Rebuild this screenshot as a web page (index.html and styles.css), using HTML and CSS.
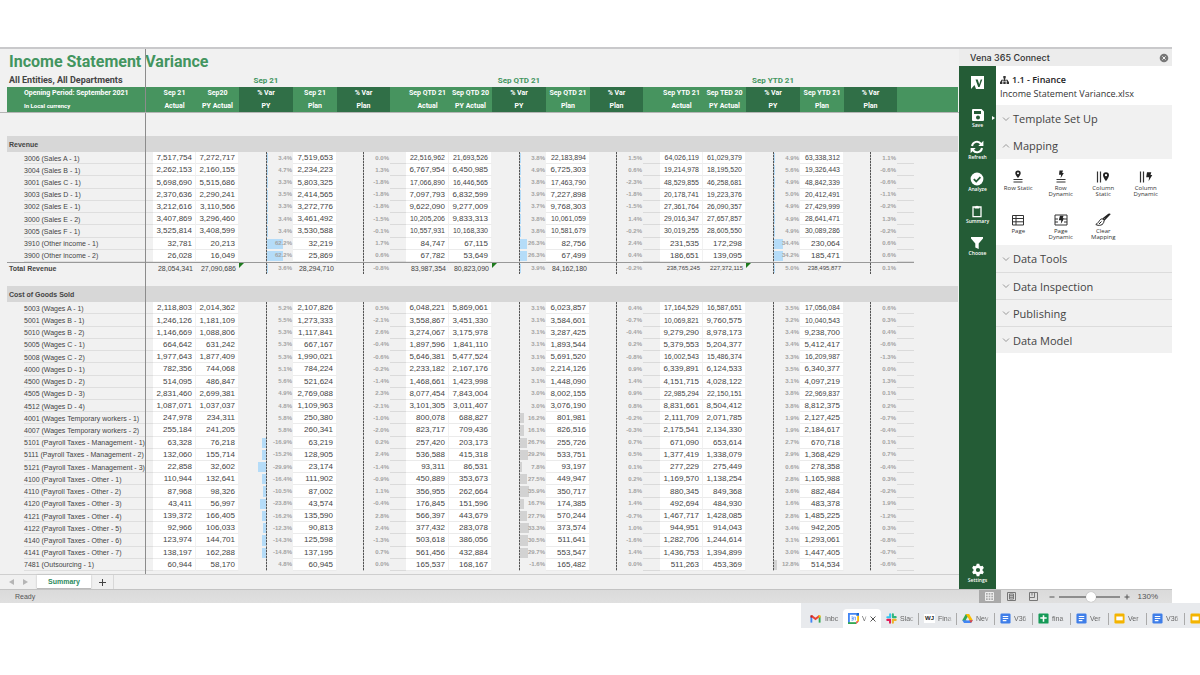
FILE: index.html
```html
<!DOCTYPE html>
<html lang="en">
<head>
<meta charset="utf-8">
<title>Income Statement Variance</title>
<link rel="stylesheet" href="styles.css">
</head>
<body>
<div class="app">
  <div class="workspace">
    <main class="workbook">
      <div class="sheet">
        <table class="grid">
          <colgroup>
            <col class="c-label">
            <col class="c-num"><col class="c-num"><col class="c-var"><col class="c-plan"><col class="c-varplan"><col class="c-gap">
            <col class="c-num"><col class="c-num"><col class="c-var"><col class="c-plan"><col class="c-varplan"><col class="c-gap-wide">
            <col class="c-num"><col class="c-num"><col class="c-var"><col class="c-plan"><col class="c-varplan"><col class="c-gap-wide">
            <col>
          </colgroup>
          <thead>
            <tr class="r-title"><th colspan="20"><h1>Income Statement Variance</h1></th></tr>
            <tr class="r-sub">
              <th class="entities">All Entities, All Departments</th>
              <th colspan="2"></th><th class="period">Sep 21</th><th colspan="5"></th><th class="period">Sep QTD 21</th><th colspan="5"></th><th class="period">Sep YTD 21</th><th colspan="4"></th>
            </tr>
            <tr class="r-head">
              <th class="lead">Opening Period: September 2021</th>
              <th>Sep 21</th><th>Sep20</th><th class="dark">% Var</th><th>Sep 21</th><th class="dark">% Var</th><th></th>
              <th>Sep QTD 21</th><th>Sep QTD 20</th><th class="dark">% Var</th><th>Sep QTD 21</th><th class="dark">% Var</th><th></th>
              <th>Sep YTD 21</th><th>Sep TED 20</th><th class="dark">% Var</th><th>Sep YTD 21</th><th class="dark">% Var</th><th></th><th></th>
            </tr>
            <tr class="r-head r-head-last">
              <th class="lead small">In Local currency</th>
              <th>Actual</th><th>PY Actual</th><th class="dark">PY</th><th>Plan</th><th class="dark">Plan</th><th></th>
              <th>Actual</th><th>PY Actual</th><th class="dark">PY</th><th>Plan</th><th class="dark">Plan</th><th></th>
              <th>Actual</th><th>PY Actual</th><th class="dark">PY</th><th>Plan</th><th class="dark">Plan</th><th></th><th></th>
            </tr>
            <tr class="r-space-lg"><td colspan="20"></td></tr>
          </thead>
          <tbody id="rows"></tbody>
        </table>
      </div>
      <nav class="sheet-tabs" aria-label="Sheets">
        <button class="arrow" aria-label="Previous sheet"><svg width="5" height="6" viewBox="0 0 5 6"><path d="M5 0v6L0 3z"/></svg></button>
        <button class="arrow" aria-label="Next sheet"><svg width="5" height="6" viewBox="0 0 5 6"><path d="M0 0v6l5-3z"/></svg></button>
        <button class="sheet-tab">Summary</button>
        <button class="add-sheet" aria-label="Add sheet"><svg width="7" height="7" viewBox="0 0 7 7"><path d="M3.5 0v7M0 3.5h7"/></svg></button>
      </nav>
    </main>
    <aside class="pane">
      <header class="pane-head">
        <h2>Vena 365 Connect</h2>
        <button class="close" aria-label="Close"><svg width="10" height="10" viewBox="0 0 10 10"><circle cx="5" cy="5" r="4.3" fill="#777"/><path d="M3.4 3.4l3.2 3.2M6.6 3.4L3.4 6.6" stroke="#f2f2f2"/></svg></button>
      </header>
      <div class="pane-body">
        <nav class="rail" aria-label="Vena">
          <svg class="logo" width="13" height="13" viewBox="0 0 13 13"><path d="M0 0h13v13H5L3.5 9 0 13z" fill="#fff"/><path d="M4.5 3.5h2.2l1.5 4.7 1.5-4.7h1.6L8.6 11H7.2z" fill="#245c36"/></svg>
          <button class="has-more"><svg width="14" height="14" viewBox="0 0 14 14"><path fill="#fff" fill-rule="evenodd" d="M2 1h8.5L13 3.5V12a1 1 0 0 1-1 1H2a1 1 0 0 1-1-1V2a1 1 0 0 1 1-1zM3 3v3h7V3zM7 7.5a2 2 0 1 0 0 4 2 2 0 0 0 0-4z"/></svg>Save</button>
          <button><svg width="14" height="14" viewBox="0 0 14 14"><path fill="none" stroke="#fff" stroke-width="2" d="M2 6a5 5 0 0 1 9-2.2M12 8a5 5 0 0 1-9 2.2"/><path fill="#fff" d="M13.4.8v5.1H8.3zM.6 13.2V8.1h5.1z"/></svg>Refresh</button>
          <button><svg width="14" height="14" viewBox="0 0 14 14"><circle cx="7" cy="7" r="6.4" fill="#fff"/><path d="M3.8 7.2l2.4 2.3 4.2-4.4" fill="none" stroke="#245c36" stroke-width="1.8"/></svg>Analyze</button>
          <button><svg width="14" height="14" viewBox="0 0 14 14"><path d="M3 3h8v9.7H3z" fill="none" stroke="#fff" stroke-width="1.3"/><path d="M4.7 4.6V2.4h1.2a1.2 1.2 0 0 1 2.2 0h1.2v2.2z" fill="#fff"/></svg>Summary</button>
          <button><svg width="14" height="14" viewBox="0 0 14 14"><path d="M1 1h12v1.6L8.7 7.4V13l-3.4-1.6v-4L1 2.6z" fill="#fff"/></svg>Choose</button>
          <button class="settings"><svg width="14" height="14" viewBox="0 0 14 14"><path fill="#fff" fill-rule="evenodd" d="M5.7.8h2.6l.4 1.8 1.2.7 1.7-.6 1.3 2.3-1.3 1.2v1.6l1.3 1.2-1.3 2.3-1.7-.6-1.2.7-.4 1.8H5.7l-.4-1.8-1.2-.7-1.7.6L1.1 9l1.3-1.2V6.2L1.1 5l1.3-2.3 1.7.6 1.2-.7zM7 4.9a2.1 2.1 0 1 0 0 4.2 2.1 2.1 0 0 0 0-4.2z"/></svg>Settings</button>
        </nav>
        <div class="tools">
          <div class="file">
            <h3><svg width="9" height="8" viewBox="0 0 9 8"><path d="M4.5 2v3M1.5 6V4.2h6V6" fill="none" stroke="#333"/><path d="M3.3 0h2.4v2.4H3.3zM0 5.5h2.4v2.4H0zM3.3 5.5h2.4v2.4H3.3zM6.6 5.5H9v2.4H6.6z" fill="#333"/></svg>1.1 - Finance</h3>
            <p>Income Statement Variance.xlsx</p>
          </div>
          <button class="section"><svg class="chev" viewBox="0 0 8 6"><path d="M1 1.5l3 3 3-3"/></svg>Template Set Up</button>
          <button class="section" aria-expanded="true"><svg class="chev" viewBox="0 0 8 6"><path d="M1 4.5l3-3 3 3"/></svg>Mapping</button>
          <div class="mapping">
            <button><svg width="14" height="14" viewBox="0 0 14 14"><path fill="#222" fill-rule="evenodd" d="M7 .5a2.7 2.7 0 0 1 2.7 2.7C9.7 5 7 8 7 8S4.3 5 4.3 3.2A2.7 2.7 0 0 1 7 .5zm0 1.7a1 1 0 1 0 0 2 1 1 0 0 0 0-2z"/><path d="M2.5 9.5h9M2.5 12h9" stroke="#333"/></svg>Row Static</button>
            <button><svg width="14" height="14" viewBox="0 0 14 14"><path fill="#222" d="M5.5.5H9L8.200 3h1.600L6.600 8.300l.5-3.500H5z"/><path d="M2.5 9.5h9M2.5 12h9" stroke="#333"/></svg>Row<br>Dynamic</button>
            <button><svg width="14" height="14" viewBox="0 0 14 14"><path d="M1.5 1.5v11M4.5 1.5v11" stroke="#333" stroke-width="1.2"/><path fill="#222" fill-rule="evenodd" d="M10 2.2a3 3 0 0 1 3 3c0 2-3 6-3 6S7 7.2 7 5.2a3 3 0 0 1 3-3zm0 1.9a1.1 1.1 0 1 0 0 2.2 1.1 1.1 0 0 0 0-2.2z"/></svg>Column<br>Static</button>
            <button><svg width="14" height="14" viewBox="0 0 14 14"><path d="M1.5 1.5v11M4.5 1.5v11" stroke="#333" stroke-width="1.2"/><path fill="#222" d="M8 2.2h4.3L11.500 5h1.800l-3.700 6.300.5-4H7.200z"/></svg>Column<br>Dynamic</button>
            <button><svg width="14" height="14" viewBox="0 0 14 14"><path d="M1.5 2.5h11V12h-11zM1.5 5.5h11M1.5 8.8h11M5 2.5V12" fill="none" stroke="#333"/></svg>Page</button>
            <button><svg width="14" height="14" viewBox="0 0 14 14"><path d="M1 2h12v10H1zM1 6h3M10 6h3M1 9h3M10 9h3" fill="none" stroke="#333"/><path fill="#222" d="M6 2.8h3.5l-.8 2.5h1.6L6.8 11l.5-3.7H4.8z"/></svg>Page<br>Dynamic</button>
            <button><svg width="16" height="14" viewBox="0 0 16 14"><path d="M15.2.8L9 7.2M14 1L8 5.8" fill="none" stroke="#222" stroke-width="1.3"/><path d="M8 6C4.5 5 4.5 9.5.8 11.5c2.5 1.5 8 1.5 8.3-4z" fill="none" stroke="#222"/><path d="M6.5 8.5L4 11" stroke="#222"/></svg>Clear<br>Mapping</button>
          </div>
          <button class="section"><svg class="chev" viewBox="0 0 8 6"><path d="M1 1.5l3 3 3-3"/></svg>Data Tools</button>
          <button class="section ruled"><svg class="chev" viewBox="0 0 8 6"><path d="M1 1.5l3 3 3-3"/></svg>Data Inspection</button>
          <button class="section ruled"><svg class="chev" viewBox="0 0 8 6"><path d="M1 1.5l3 3 3-3"/></svg>Publishing</button>
          <button class="section ruled"><svg class="chev" viewBox="0 0 8 6"><path d="M1 1.5l3 3 3-3"/></svg>Data Model</button>
        </div>
      </div>
    </aside>
  </div>
  <footer class="status">
    <span class="ready">Ready</span>
    <div class="views">
      <button class="on" aria-label="Normal view"><svg width="9" height="9" viewBox="0 0 9 9"><path d="M.5.5h8v8h-8zM3.2.5v8M5.8.5v8M.5 3.2h8M.5 5.8h8" fill="none" stroke="#eee"/></svg></button>
      <button aria-label="Page layout"><svg width="9" height="9" viewBox="0 0 9 9"><path d="M.5.5h8v8h-8z" fill="none" stroke="#777"/><path d="M2.5 2h4v5h-4zM2.5 3.7h4M2.5 5.3h4" fill="none" stroke="#777"/></svg></button>
      <button aria-label="Page break preview"><svg width="9" height="9" viewBox="0 0 9 9"><path d="M.5.5h8v8h-8zM.5 5.5h5v-5M3 .5v3" fill="none" stroke="#777"/></svg></button>
    </div>
    <div class="zoom">
      <button aria-label="Zoom out"><svg width="6" height="6" viewBox="0 0 6 6"><path d="M.5 3h5"/></svg></button>
      <input type="range" min="0" max="100" value="54" aria-label="Zoom">
      <button aria-label="Zoom in"><svg width="6" height="6" viewBox="0 0 6 6"><path d="M.5 3h5M3 .5v5"/></svg></button>
      <span>130%</span>
    </div>
  </footer>
</div>
<nav class="tabs" id="tabs" aria-label="Browser tabs"></nav>
<svg class="defs" aria-hidden="true">
  <symbol id="i-mail" viewBox="0 0 12 12"><path d="M1.5 10.5v-7" stroke="#4285f4" stroke-width="2"/><path d="M10.5 10.5v-7" stroke="#34a853" stroke-width="2"/><path d="M1.5 3L6 6.6 10.5 3" fill="none" stroke="#ea4335" stroke-width="2.2"/><path d="M1.5 5V2.5" stroke="#c5221f" stroke-width="2"/><path d="M10.5 5V2.5" stroke="#fbbc04" stroke-width="2"/></symbol>
  <symbol id="i-cal" viewBox="0 0 12 12"><path d="M1 1h10v10H1z" fill="#fff"/><path d="M1 11V1h8" fill="none" stroke="#4285f4" stroke-width="2"/><path d="M0 11h9" stroke="#34a853" stroke-width="2"/><path d="M11 3v6" stroke="#fbbc04" stroke-width="2"/><path d="M9 0h3v3H9z" fill="#1967d2"/><path d="M9 12V9h3z" fill="#ea4335"/><path d="M3.7 4.3h2v3.5h-2M4 6h1.7M7 4.5h1V8" fill="none" stroke="#4285f4" stroke-width=".8"/></symbol>
  <symbol id="i-slack" viewBox="0 0 12 12"><g stroke-width="2.2" stroke-linecap="round" fill="none"><path d="M4.5 1.4v3.2M1.4 4.6h2" stroke="#36c5f0"/><path d="M7.5 4.5h3.1M7.5 1.4v3" stroke="#2eb67d"/><path d="M7.5 7.5v3.1M8 7.5h2.6" stroke="#ecb22e"/><path d="M1.4 7.5h3v3.1" stroke="#e01e5a"/></g></symbol>
  <symbol id="i-drive" viewBox="0 0 12 12"><path d="M4.2 1h3.6L4 11 .3 7.8z" fill="#34a853"/><path d="M4.2 1h3.6l4 6.8H8z" fill="#fbbc04"/><path d="M.3 7.8L2.2 11h7.6l2-3.2z" fill="#4285f4"/><path d="M6 4.3l2 3.5H4z" fill="#e8eaed"/><path d="M8 7.8h3.8L9.8 11z" fill="#ea4335"/></symbol>
  <symbol id="i-docs" viewBox="0 0 12 12"><rect x=".5" y=".5" width="11" height="11" rx="1.5" fill="#3f7ee8"/><path d="M3 3.8h6M3 6h6M3 8.3h4" stroke="#fff" stroke-width="1.2"/></symbol>
  <symbol id="i-sheets" viewBox="0 0 12 12"><rect x=".5" y=".5" width="11" height="11" rx="1" fill="#159a57"/><path d="M2.5 5.5h7M6 2.5v7" stroke="#fff" stroke-width="1.7"/></symbol>
  <symbol id="i-slides" viewBox="0 0 12 12"><rect x=".5" y=".5" width="11" height="11" rx="1.5" fill="#f4b400"/><path d="M2.5 3.8h7V8h-7z" fill="#fff"/></symbol>
</svg>
<script src="script.js"></script>
</body>
</html>
```
FILE: styles.css
```css
* { box-sizing: border-box; }
body { margin: 0; padding-top: 47px; background: #fff; font-family: "Liberation Sans", Arial, sans-serif; color: #444; }
button { border: 0; padding: 0; background: none; font: inherit; color: inherit; }
h1, h2, h3, p { margin: 0; }
svg { display: block; flex: none; }
.defs { position: absolute; width: 0; height: 0; }

.app { display: flex; flex-direction: column; min-height: calc(100vh - 119px); margin-right: 28px; border-top: 2px solid #c9c9cb; }
.workspace { display: flex; flex: 1; }
.workbook { flex: 1; min-width: 0; display: flex; flex-direction: column; background: #f1f1f1; }
.sheet { position: relative; flex: 1; display: grid; padding-left: 7px; padding-right: 1px; overflow: hidden; }
.sheet::before { content: ""; position: absolute; z-index: 2; left: 145px; top: 0; bottom: 0; width: 1px; background: #8c8c8c; }
.sheet::after { content: ""; position: absolute; z-index: 2; left: 0; right: 0; top: 63px; height: 1px; background: #b5b5b5; }

.grid { width: 100%; height: 100%; table-layout: fixed; border-collapse: separate; border-spacing: 0; }
.grid th, .grid td { padding: 0; white-space: nowrap; font-size: 7px; line-height: 11px; }
.c-label { width: 146px; }
.c-num { width: 43px; }
.c-var { width: 54px; }
.c-plan { width: 44px; }
.c-varplan { width: 53px; }
.c-gap { width: 16px; }
.c-gap-wide { width: 17px; }

.grid thead th { font-family: Roboto, "Liberation Sans", sans-serif; font-weight: 700; }
.r-title { height: 25px; }
.r-title th { text-align: left; }
.r-title h1 { padding-left: 2px; font-size: 16px; line-height: 25px; color: #43955f; }
.r-sub { height: 13px; }
.grid .entities { text-align: left; padding-left: 2px; font-size: 9px; line-height: 13px; }
.grid .period { font-size: 8px; line-height: 13px; color: #43955f; }
.r-head { height: 12px; }
.r-head-last { height: 13px; }
.grid .r-head th { background: #47945f; color: #fff; font-size: 7px; line-height: 12px; }
.grid .r-head .dark { background: #306f47; }
.grid .r-head .lead { text-align: left; padding-left: 17px; }
.grid .r-head .small { font-size: 6px; }
.r-space-lg { height: 24px; }
.r-space { height: 12px; }
.r-tail { height: 3px; }
.grid .r-space td, .grid .r-tail td { line-height: 0; font-size: 0; }
.r-band { height: 16px; }
.grid .r-band th { padding: 0 2px; text-align: left; background: #d7d7d7; color: #444; font-weight: 700; }

.grid .label { text-align: left; font-weight: 400; color: #444; padding-left: 17px; overflow: visible; background: linear-gradient(#dedede, #dedede) right bottom / calc(100% - 17px) 1px no-repeat; }
.num { text-align: right; background: #fff; color: #444; border-bottom: 1px solid #ebebeb; border-right: 1px solid #f1f1f1; }
.grid .num { padding-right: 3px; font-size: 8px; }
.grid .num.long { font-size: 7px; }
.grid .num.tiny { font-size: 6px; }
.rule { border-bottom: 1px solid #dadada; }
.var { position: relative; text-align: right; color: #a3a3a3; background: repeating-linear-gradient(#555 0 2px, #bbb 2px 3px) center / 1px 100% no-repeat; }
.grid .var { font-size: 6px; padding-right: 1px; font-weight: 700; }
.var span { position: relative; z-index: 1; }
.bar { position: absolute; top: 1px; bottom: 1px; background: #b5dcf8; }
.bar.grey { background: #d2d2d2; }
.bar.up { left: 50%; margin-left: 1px; }
.bar.down { right: 50%; }
.r-total > * { border-top: 1px solid #999; }
.grid .r-total > :last-child { border-top: 0; }
.grid .r-total .label { padding-left: 2px; font-weight: 700; background: none; }
.r-total .num { background: none; border-bottom: 0; border-right: 0; }
.r-total .rule { border-bottom: 0; }
.flag::before { content: ""; position: absolute; left: 0; top: 0; border-top: 5px solid #1d7a1d; border-right: 5px solid transparent; }

.sheet-tabs { display: flex; align-items: center; height: 15px; border-top: 1px solid #cfcfcf; background: #f0f0f0; padding-left: 9px; }
.arrow { width: 14px; fill: #b5b5b5; }
.sheet-tab { align-self: stretch; width: 54px; background: #fff; border-bottom: 1px solid #bbb; box-shadow: 0 0 2px #bbb; color: #2c8a5c; font-size: 7px; font-weight: 700; }
.add-sheet { align-self: stretch; display: flex; align-items: center; justify-content: center; width: 23px; border-right: 1px solid #d8d8d8; stroke: #444; }

.pane { width: 213px; display: flex; flex-direction: column; font-family: "Open Sans", sans-serif; background: #fff; }
.pane-head { display: flex; align-items: center; justify-content: space-between; height: 17px; padding: 0 3px 0 11px; background: #ececec; }
.pane-head h2 { font: 500 9px/17px Inter, sans-serif; color: #333; }
.pane-body { flex: 1; display: flex; }
.rail { width: 37px; background: #245c36; display: flex; flex-direction: column; align-items: center; padding: 10px 0 5px; color: #fff; }
.rail button { position: relative; display: flex; flex-direction: column; align-items: center; height: 32px; font-size: 5px; font-weight: 600; line-height: 6px; }
.rail .logo { margin-bottom: 19px; }
.has-more::after { content: ""; position: absolute; right: -10px; top: 8px; border: 2px solid transparent; border-left: 3px solid #fff; border-right: 0; }
.rail .settings { margin-top: auto; height: 21px; }
.tools { flex: 1; min-width: 0; color: #333; }
.file { height: 39px; padding: 7px 4px 0; font-size: 9px; line-height: 14px; }
.file h3 { display: flex; align-items: center; gap: 3px; font-size: 9px; font-weight: 600; line-height: 14px; color: #222; }
.section { display: flex; align-items: center; gap: 3px; width: 100%; height: 27px; padding-left: 6px; background: #f1f1f1; font-size: 11px; font-weight: 400; color: #444; text-align: left; }
.ruled { border-top: 1px solid #dcdcdc; }
.chev { width: 8px; height: 6px; fill: none; stroke: #999; }
.mapping { display: grid; grid-template-columns: repeat(4, 1fr); grid-template-rows: 43px 32px; padding: 11px 5px 0 1px; }
.mapping button { display: flex; flex-direction: column; align-items: center; gap: 1px; font-size: 6px; line-height: 6px; color: #333; }

.status { display: flex; align-items: center; height: 14px; border-top: 1px solid #c3c3c3; background: linear-gradient(#dadada, #e0e0e0); color: #555; font-size: 8px; }
.ready { flex: 1; padding-left: 15px; font-size: 7px; }
.views { display: flex; align-self: stretch; }
.views button { width: 22px; display: flex; align-items: center; justify-content: center; }
.views .on { background: #a9a9a9; }
.zoom { display: flex; align-items: center; gap: 4px; padding: 0 14px 0 4px; stroke: #555; font-size: 8px; }
.zoom span { padding-left: 4px; stroke: none; }
.zoom input { appearance: none; width: 61px; height: 10px; margin: 0; background: linear-gradient(#8d8d8d, #8d8d8d) center / 100% 2px no-repeat; }
.zoom input::-webkit-slider-thumb { appearance: none; width: 10px; height: 10px; border-radius: 50%; background: #fff; box-shadow: 0 0 1px #888; }

.tabs { display: flex; width: 399px; height: 25px; margin-left: auto; padding: 6px 0 0 4px; background: #e8eaed; overflow: hidden; }
.tab { display: flex; flex: none; align-items: center; gap: 4px; width: 38px; padding-left: 5px; color: #666; font-size: 7px; text-decoration: none; white-space: nowrap; }
.tab svg { width: 11px; height: 11px; }
.tab .name { flex: 1; mask-image: linear-gradient(90deg, #000 60%, transparent); }
.tab.ruled-tab::after { content: ""; width: 1px; height: 12px; background: #aaa; }
.tab.ruled-tab { gap: 3px; }
.tab.active { background: #fff; border-radius: 4px 4px 0 0; gap: 3px; }
.tab.active .x { width: 6px; height: 6px; margin-right: 6px; stroke: #555; }
.wj { font: 700 6px/9px "Liberation Sans", sans-serif; width: 11px; background: #fff; color: #222; text-align: center; }
```
FILE: script.js
```js
const revenue = `
3006 (Sales A - 1)|7,517,754|7,272,717|3.4|7,519,653|0.0|22,516,962|21,693,526|3.8|22,183,894|1.5|64,026,119|61,029,379|4.9|63,338,312|1.1
3004 (Sales B - 1)|2,262,153|2,160,155|4.7|2,234,223|1.3|6,767,954|6,450,985|4.9|6,725,303|0.6|19,214,978|18,195,520|5.6|19,326,443|-0.6
3001 (Sales C - 1)|5,698,690|5,515,686|3.3|5,803,325|-1.8|17,066,890|16,446,565|3.8|17,463,790|-2.3|48,529,855|46,258,681|4.9|48,842,339|-0.6
3003 (Sales D - 1)|2,370,636|2,290,241|3.5|2,414,565|-1.8|7,097,793|6,832,599|3.9|7,227,898|-1.8|20,178,741|19,223,376|5.0|20,412,491|-1.1
3002 (Sales E - 1)|3,212,616|3,110,566|3.3|3,272,776|-1.8|9,622,090|9,277,009|3.7|9,768,303|-1.5|27,361,764|26,090,357|4.9|27,429,999|-0.2
3000 (Sales E - 2)|3,407,869|3,296,460|3.4|3,461,492|-1.5|10,205,206|9,833,313|3.8|10,061,059|1.4|29,016,347|27,657,857|4.9|28,641,471|1.3
3005 (Sales F - 1)|3,525,814|3,408,599|3.4|3,530,588|-0.1|10,557,931|10,168,330|3.8|10,581,679|-0.2|30,019,255|28,605,550|4.9|30,089,286|-0.2
3910 (Other income - 1)|32,781|20,213|62.2|32,219|1.7|84,747|67,115|26.3|82,756|2.4|231,535|172,298|34.4|230,064|0.6
3900 (Other income - 2)|26,028|16,049|62.2|25,869|0.6|67,782|53,649|26.3|67,499|0.4|186,651|139,095|34.2|185,471|0.6`;

const totalRevenue = `Total Revenue|28,054,341|27,090,686|3.6|28,294,710|-0.8|83,987,354|80,823,090|3.9|84,162,180|-0.2|238,765,245|227,372,115|5.0|238,495,877|0.1`;

const costs = `
5003 (Wages A - 1)|2,118,803|2,014,362|5.2|2,107,826|0.5|6,048,221|5,869,061|3.1|6,023,857|0.4|17,164,529|16,587,651|3.5|17,056,084|0.6
5001 (Wages B - 1)|1,246,126|1,181,109|5.5|1,273,333|-2.1|3,558,867|3,451,330|3.1|3,584,601|-0.7|10,069,821|9,760,575|3.2|10,040,543|0.3
5010 (Wages B - 2)|1,146,669|1,088,806|5.3|1,117,841|2.6|3,274,067|3,175,978|3.1|3,287,425|-0.4|9,279,290|8,978,173|3.4|9,238,700|0.4
5005 (Wages C - 1)|664,642|631,242|5.3|667,167|-0.4|1,897,596|1,841,110|3.1|1,893,544|0.2|5,379,553|5,204,377|3.4|5,412,417|-0.6
5008 (Wages C - 2)|1,977,643|1,877,409|5.3|1,990,021|-0.6|5,646,381|5,477,524|3.1|5,691,520|-0.8|16,002,543|15,486,374|3.3|16,209,987|-1.3
4000 (Wages D - 1)|782,356|744,068|5.1|784,224|-0.2|2,233,182|2,167,176|3.0|2,214,126|0.9|6,339,891|6,124,533|3.5|6,340,377|0.0
4500 (Wages D - 2)|514,095|486,847|5.6|521,624|-1.4|1,468,661|1,423,998|3.1|1,448,090|1.4|4,151,715|4,028,122|3.1|4,097,219|1.3
4505 (Wages D - 3)|2,831,460|2,699,381|4.9|2,769,088|2.3|8,077,454|7,843,004|3.0|8,002,155|0.9|22,985,294|22,150,151|3.8|22,969,837|0.1
4512 (Wages D - 4)|1,087,071|1,037,037|4.8|1,109,963|-2.1|3,101,305|3,011,407|3.0|3,076,190|0.8|8,831,661|8,504,412|3.8|8,812,375|0.2
4001 (Wages Temporary workers - 1)|247,978|234,311|5.8|250,380|-1.0|800,078|688,827|16.2|801,981|-0.2|2,111,709|2,071,785|1.9|2,127,425|-0.7
4007 (Wages Temporary workers - 2)|255,184|241,205|5.8|260,341|-2.0|823,717|709,436|16.1|826,516|-0.3|2,175,541|2,134,330|1.9|2,184,617|-0.4
5101 (Payroll Taxes - Management - 1)|63,328|76,218|-16.9|63,219|0.2|257,420|203,173|26.7|255,726|0.7|671,090|653,614|2.7|670,718|0.1
5111 (Payroll Taxes - Management - 2)|132,060|155,714|-15.2|128,905|2.4|536,588|415,318|29.2|533,751|0.5|1,377,419|1,338,079|2.9|1,368,429|0.7
5121 (Payroll Taxes - Management - 3)|22,858|32,602|-29.9|23,174|-1.4|93,311|86,531|7.8|93,197|0.1|277,229|275,449|0.6|278,358|-0.4
4100 (Payroll Taxes - Other - 1)|110,944|132,641|-16.4|111,902|-0.9|450,889|353,673|27.5|449,947|0.2|1,169,570|1,138,254|2.8|1,165,988|0.3
4110 (Payroll Taxes - Other - 2)|87,968|98,326|-10.5|87,002|1.1|356,955|262,664|35.9|350,717|1.8|880,345|849,368|3.6|882,484|-0.2
4120 (Payroll Taxes - Other - 3)|43,411|56,997|-23.8|43,574|-0.4|176,845|151,596|16.7|174,385|1.4|492,694|484,930|1.6|483,378|1.9
4121 (Payroll Taxes - Other - 4)|139,372|166,405|-16.2|135,590|2.8|566,397|443,679|27.7|570,244|-0.7|1,467,717|1,428,085|2.8|1,485,225|-1.2
4122 (Payroll Taxes - Other - 5)|92,966|106,033|-12.3|90,813|2.4|377,432|283,078|33.3|373,574|1.0|944,951|914,043|3.4|942,205|0.3
4140 (Payroll Taxes - Other - 6)|123,974|144,701|-14.3|125,598|-1.3|503,618|386,056|30.5|511,641|-1.6|1,282,706|1,244,614|3.1|1,293,061|-0.8
4141 (Payroll Taxes - Other - 7)|138,197|162,288|-14.8|137,195|0.7|561,456|432,884|29.7|553,547|1.4|1,436,753|1,394,899|3.0|1,447,405|-0.7
7481 (Outsourcing - 1)|60,944|58,170|4.8|60,945|0.0|165,537|168,167|-1.6|165,482|0.0|511,263|453,369|12.8|514,534|-0.6`;

const PX_PER_POINT = 0.26;

function bar(value, isCost) {
  if (isCost && Math.abs(value) < 7) return '';
  const width = Math.max(1, Math.round(Math.abs(value) * PX_PER_POINT));
  const tone = isCost && value > 0 ? ' grey' : '';
  return `<i class="bar ${value < 0 ? 'down' : 'up'}${tone}" style="width:${width}px"></i>`;
}

// Longer figures step down in size so that they stay inside the column.
function fit(text) {
  if (text.length > 10) return ' tiny';
  return text.length > 9 ? ' long' : '';
}

function row(line, kind) {
  const [label, ...cells] = line.split('|');
  const isTotal = kind === 'total';
  let html = `<tr class="${isTotal ? 'r-total' : 'r-data'}"><th scope="row" class="label">${label}</th>`;
  cells.forEach((text, i) => {
    const col = i % 5;
    if (col === 2) {
      html += `<td class="var${isTotal ? ' flag' : ''}">${bar(parseFloat(text), kind === 'cost')}<span>${text}%</span></td>`;
    } else if (col === 4) {
      html += `<td class="var"><span>${text}%</span></td><td class="rule"></td>`;
    } else {
      html += `<td class="num${fit(text)}">${text}</td>`;
    }
  });
  return html + '<td></td></tr>';
}

const band = (title) => `<tr class="r-band"><th colspan="20" scope="colgroup">${title}</th></tr>`;
const rows = (text, kind) => text.trim().split('\n').map((line) => row(line, kind)).join('');

document.getElementById('rows').innerHTML =
  band('Revenue') + rows(revenue, 'revenue') + row(totalRevenue, 'total') +
  '<tr class="r-space"><td colspan="20"></td></tr>' +
  band('Cost of Goods Sold') + rows(costs, 'cost') +
  '<tr class="r-tail"><td colspan="20"></td></tr>';

const tabs = [
  ['mail', 'Inbc'], ['cal', 'V'], ['slack', 'Slac'], ['wj', 'Fina'], ['drive', 'Nev'],
  ['docs', 'V36'], ['sheets', 'fina'], ['docs', 'Ver'], ['slides', 'Ver'], ['docs', 'V36'], ['slides', ''],
];

document.getElementById('tabs').innerHTML = tabs.map(([icon, name], i) => {
  const picture = icon === 'wj' ? '<span class="wj">WJ</span>' : `<svg><use href="#i-${icon}"/></svg>`;
  const close = '<svg class="x" viewBox="0 0 6 6"><path d="M.5.5l5 5M5.5.5l-5 5"/></svg>';
  const state = i === 1 ? ' active' : i > 1 ? ' ruled-tab' : '';
  return `<a href="#" class="tab${state}">${picture}<span class="name">${name}</span>${i === 1 ? close : ''}</a>`;
}).join('');
```
